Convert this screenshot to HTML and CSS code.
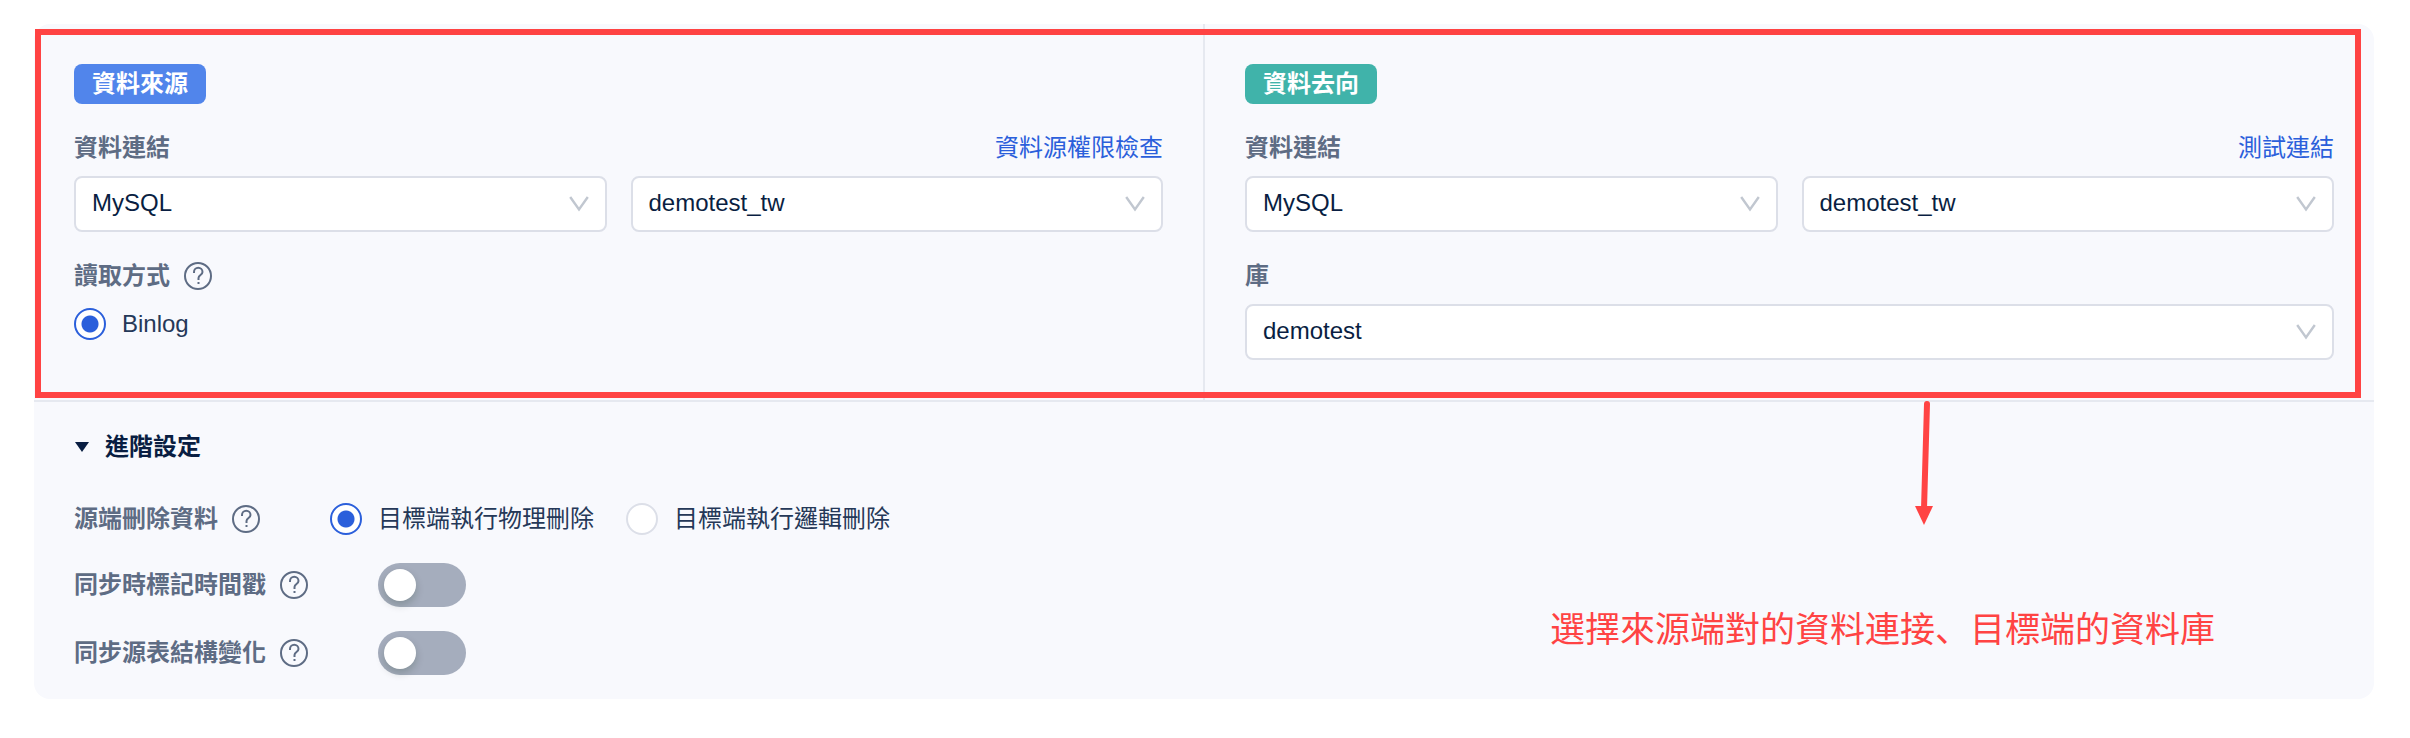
FILE: index.html
```html
<!DOCTYPE html>
<html lang="zh-Hant">

<head>
    <meta charset="UTF-8">
    <meta name="viewport" content="width=device-width, initial-scale=1.0">
    <title>資料連結</title>
    <link rel="stylesheet" href="styles.css">
</head>

<body>
    <!-- 共用圖示 -->
    <svg class="sprite" aria-hidden="true">
        <symbol id="icon-help" viewBox="0 0 28 28">
            <circle cx="14" cy="14" r="13" fill="none" stroke="currentColor" stroke-width="2" />
            <path d="M10 11V10a4 4 0 0 1 8.500 0c0 3-4 3-4 6v2" fill="none" stroke="currentColor" stroke-width="2" />
            <path d="M13.500 20h2v2h-2z" fill="currentColor" />
        </symbol>
        <symbol id="icon-arrow" viewBox="0 0 20 16">
            <path d="M1.200 1l8.800 12.500L18.800 1" fill="none" stroke="currentColor" stroke-width="2.400" />
        </symbol>
    </svg>

    <main class="card">
        <div class="endpoints">
            <section class="endpoint">
                <h2 class="tag tag-source">資料來源</h2>
                <div class="field">
                    <div class="field-head">
                        <label class="label" for="source-type">資料連結</label>
                        <a class="link" href="#">資料源權限檢查</a>
                    </div>
                    <div class="select-row">
                        <div class="select-box">
                            <select id="source-type">
                                <option>MySQL</option>
                            </select>
                            <svg><use href="#icon-arrow" /></svg>
                        </div>
                        <div class="select-box">
                            <select aria-label="資料來源連結">
                                <option>demotest_tw</option>
                            </select>
                            <svg><use href="#icon-arrow" /></svg>
                        </div>
                    </div>
                </div>
                <div class="field">
                    <div class="field-head">
                        <span class="label">讀取方式<svg class="help"><use href="#icon-help" /></svg></span>
                    </div>
                    <label class="radio"><input type="radio" name="read-mode" checked>Binlog</label>
                </div>
            </section>

            <div class="divider"></div>

            <section class="endpoint">
                <h2 class="tag tag-target">資料去向</h2>
                <div class="field">
                    <div class="field-head">
                        <label class="label" for="target-type">資料連結</label>
                        <a class="link" href="#">測試連結</a>
                    </div>
                    <div class="select-row">
                        <div class="select-box">
                            <select id="target-type">
                                <option>MySQL</option>
                            </select>
                            <svg><use href="#icon-arrow" /></svg>
                        </div>
                        <div class="select-box">
                            <select aria-label="資料去向連結">
                                <option>demotest_tw</option>
                            </select>
                            <svg><use href="#icon-arrow" /></svg>
                        </div>
                    </div>
                </div>
                <div class="field">
                    <div class="field-head">
                        <label class="label" for="target-db">庫</label>
                    </div>
                    <div class="select-box">
                        <select id="target-db">
                            <option>demotest</option>
                        </select>
                        <svg><use href="#icon-arrow" /></svg>
                    </div>
                </div>
            </section>

            <div class="highlight"></div>
        </div>

        <details class="advanced" open>
            <summary>進階設定</summary>
            <div class="rows">
                <div class="row">
                    <span class="label">源端刪除資料<svg class="help"><use href="#icon-help" /></svg></span>
                    <div class="radio-group">
                        <label class="radio"><input type="radio" name="delete-mode" checked>目標端執行物理刪除</label>
                        <label class="radio"><input type="radio" name="delete-mode">目標端執行邏輯刪除</label>
                    </div>
                </div>
                <div class="row">
                    <label class="label" for="mark-time">同步時標記時間戳<svg class="help"><use href="#icon-help" /></svg></label>
                    <input class="switch" id="mark-time" type="checkbox" role="switch">
                </div>
                <div class="row">
                    <label class="label" for="sync-schema">同步源表結構變化<svg class="help"><use href="#icon-help" /></svg></label>
                    <input class="switch" id="sync-schema" type="checkbox" role="switch">
                </div>
            </div>
        </details>

        <!-- 說明標註 -->
        <div class="note">
            <svg class="note-arrow" viewBox="0 0 20 124">
                <path d="M13 3L10 108" fill="none" stroke="currentColor" stroke-width="6" stroke-linecap="round" />
                <path d="M1 105h18l-9 19z" fill="currentColor" />
            </svg>
            <p lang="zh-CN">選擇來源端對的資料連接、目標端的資料庫</p>
        </div>
    </main>
</body>

</html>
```
FILE: styles.css
```css
* {
    box-sizing: border-box;
}

body {
    margin: 0;
    padding: 24px 36px 36px 34px;
    background: #fff;
    color: #091e42;
    font-family: "Liberation Sans", "Noto Sans CJK SC", sans-serif;
    font-size: 24px;
    line-height: 32px;
}

h2,
p {
    margin: 0;
}

.sprite {
    display: none;
}

.card {
    position: relative;
    border-radius: 16px;
    background: #f8f9fd;
}

/* 來源 / 去向 */
.endpoints {
    position: relative;
    display: grid;
    grid-template-columns: 1fr 2px 1fr;
    border-bottom: 2px solid #e6e9f0;
}

.endpoint {
    padding: 40px;
}

.divider {
    background: #e6e9f0;
}

.tag {
    width: fit-content;
    padding: 0 18px;
    border-radius: 8px;
    color: #fff;
    font-size: 24px;
    line-height: 40px;
}

.tag-source {
    background: #5185eb;
}

.tag-target {
    background: #40b3aa;
}

.field {
    margin-top: 28px;
}

.field-head {
    display: flex;
    justify-content: space-between;
    margin-bottom: 12px;
}

.label {
    display: flex;
    align-items: center;
    gap: 14px;
    color: #5e6c84;
    font-weight: bold;
}

.help {
    flex: none;
    width: 28px;
    height: 28px;
}

.link {
    color: #2b5fdb;
    text-decoration: none;
}

/* 下拉選單 */
.select-row {
    display: grid;
    grid-template-columns: 1fr 1fr;
    gap: 24px;
}

.select-box {
    position: relative;
}

.select-box select {
    display: block;
    width: 100%;
    height: 56px;
    padding: 0 48px 2px 16px;
    border: 2px solid #dcdfe8;
    border-radius: 8px;
    background: #fff;
    color: inherit;
    font: inherit;
    appearance: none;
}

.select-box svg {
    position: absolute;
    top: 20px;
    right: 18px;
    width: 20px;
    height: 16px;
    color: #c1c7d0;
    pointer-events: none;
}

/* 單選 */
.radio {
    display: flex;
    align-items: center;
    gap: 16px;
    height: 40px;
    color: #253858;
}

.radio input {
    flex: none;
    width: 32px;
    height: 32px;
    margin: 0;
    border: 2px solid #dcdfe8;
    border-radius: 50%;
    background: #fff;
    appearance: none;
}

.radio input:checked {
    border-color: #2b5fdb;
    background: radial-gradient(circle, #2b5fdb 8px, #fff 9px);
}

.radio-group {
    display: flex;
    gap: 32px;
}

/* 進階設定 */
.advanced {
    padding: 24px 40px;
}

.advanced summary {
    display: flex;
    align-items: center;
    gap: 16px;
    margin-bottom: 31px;
    font-weight: bold;
    line-height: 42px;
    list-style: none;
    cursor: pointer;
}

.advanced summary::before {
    content: "";
    margin-left: 1px;
    border-top: 10px solid #091e42;
    border-left: 7px solid transparent;
    border-right: 7px solid transparent;
}

.rows {
    display: grid;
    gap: 24px;
}

.row {
    display: flex;
    align-items: center;
}

.row > .label {
    width: 256px;
}

.switch {
    width: 88px;
    height: 44px;
    margin: 0 0 0 48px;
    padding: 6px;
    border-radius: 22px;
    background: #a5adbd;
    appearance: none;
}

.switch::before {
    content: "";
    display: block;
    width: 32px;
    height: 32px;
    border-radius: 50%;
    background: #fff;
    box-shadow: 0 4px 8px rgba(0, 35, 11, 0.2);
}

.switch:checked {
    background: #2b5fdb;
}

.switch:checked::before {
    margin-left: auto;
}

/* 標註 */
.highlight {
    position: absolute;
    top: 5px;
    right: 13px;
    bottom: 2px;
    left: 1px;
    border: 6px solid #ff4343;
    pointer-events: none;
}

.note {
    position: absolute;
    right: 159px;
    bottom: 44px;
    display: flex;
    flex-direction: column;
    gap: 80px;
    color: #ff4343;
    font-size: 35px;
    line-height: 50px;
    pointer-events: none;
}

.note-arrow {
    width: 20px;
    height: 124px;
    margin-left: 364px;
}
```
